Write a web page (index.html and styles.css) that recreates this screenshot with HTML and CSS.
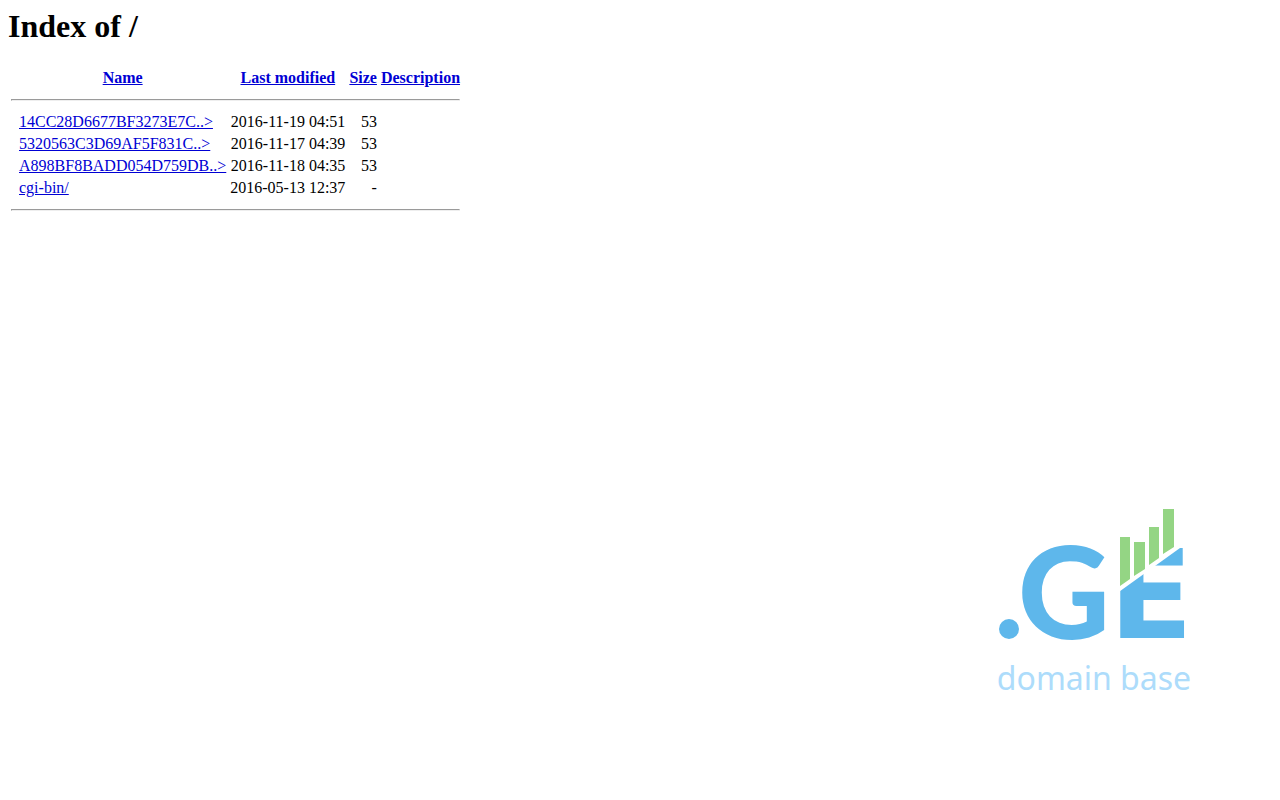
FILE: index.html
```
<!DOCTYPE html>
<html lang="en">
<head>
    <meta charset="UTF-8">
    <title>Index of /</title>
    <link rel="stylesheet" href="styles.css">
</head>
<body>
    <h1>Index of /</h1>
    <table class="listing">
        <tr>
            <th>&nbsp;</th>
            <th><a href="?C=N;O=D">Name</a></th>
            <th><a href="?C=M;O=A">Last modified</a></th>
            <th><a href="?C=S;O=A">Size</a></th>
            <th><a href="?C=D;O=A">Description</a></th>
        </tr>
        <tr><td colspan="5"><hr></td></tr>
        <tr>
            <td></td>
            <td><a href="14CC28D6677BF3273E7C.txt">14CC28D6677BF3273E7C..&gt;</a></td>
            <td class="num">2016-11-19 04:51</td>
            <td class="num">53</td>
            <td></td>
        </tr>
        <tr>
            <td></td>
            <td><a href="5320563C3D69AF5F831C.txt">5320563C3D69AF5F831C..&gt;</a></td>
            <td class="num">2016-11-17 04:39</td>
            <td class="num">53</td>
            <td></td>
        </tr>
        <tr>
            <td></td>
            <td><a href="A898BF8BADD054D759DB.txt">A898BF8BADD054D759DB..&gt;</a></td>
            <td class="num">2016-11-18 04:35</td>
            <td class="num">53</td>
            <td></td>
        </tr>
        <tr>
            <td></td>
            <td><a href="cgi-bin/">cgi-bin/</a></td>
            <td class="num">2016-05-13 12:37</td>
            <td class="num">-</td>
            <td></td>
        </tr>
        <tr><td colspan="5"><hr></td></tr>
    </table>

    <div class="logo">
        <svg width="200" height="140" viewBox="994 506 200 140">
            <circle class="blue" cx="1009" cy="629" r="10"/>
            <text class="letter-g" x="1018" y="639">G</text>
            <text class="letter-e" x="1109" y="638">E</text>
            <!-- white cut through the E, with the bars standing on it -->
            <path class="cut" d="M1116 540H1163L1180 506V548L1116 594Z"/>
            <path class="green" d="M1120 537h10v42l-10 7zM1134 542h11v27l-11 7zM1149 527h10v31l-10 7zM1163 509h11v38l-11 7z"/>
        </svg>
        <div class="tagline">domain base</div>
    </div>
</body>
</html>
```
FILE: styles.css
```
body {
    font-family: "Liberation Serif", serif;
    font-size: 16px;
    display: flex;
    flex-direction: column;
    align-items: flex-start;
    box-sizing: border-box;
    min-height: 100vh;
    margin: 0;
    padding: 8px;
    background: #fff;
    color: #000;
}
h1 {
    margin: 0 0 21px;
    font-size: 32px;
}
a {
    color: #0000d4;
}
hr {
    margin: 8px 0;
}
.num {
    text-align: right;
}
/* logo in the bottom right corner */
.logo {
    display: flex;
    flex-direction: column;
    align-items: center;
    align-self: flex-end;
    margin-top: auto;
    margin-right: 78px;
    margin-bottom: 92px;
}
.logo svg {
    overflow: visible;
}
.blue,
.letter-g,
.letter-e {
    fill: #5eb7eb;
}
.letter-g {
    font: 900 127px Lato, sans-serif;
}
.letter-e {
    font: bold 123px "DejaVu Sans", sans-serif;
}
.cut {
    fill: #fff;
}
.green {
    fill: #94d584;
}
.tagline {
    margin-top: 10px;
    font: 32px/44px "Noto Sans", sans-serif;
    color: #addcfb;
}
```
